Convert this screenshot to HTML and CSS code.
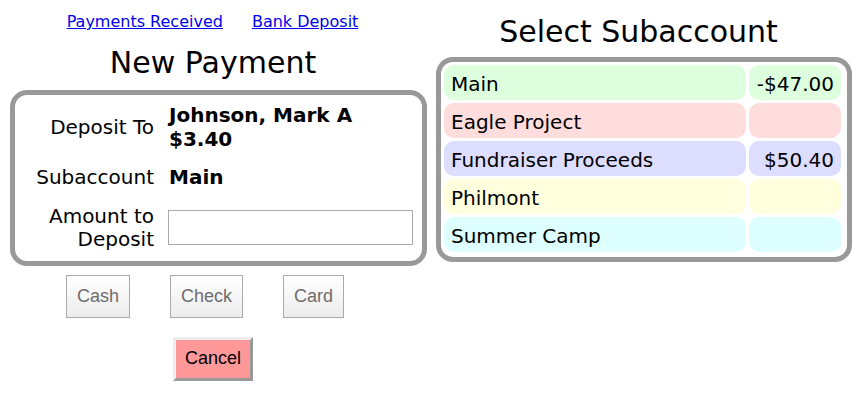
FILE: index.html
```html
<!DOCTYPE html>
<html>
<head>
<meta charset="utf-8">
<title>New Payment</title>
<link rel="stylesheet" href="styles.css">
</head>
<body>
<div class="page">
  <div class="left">
    <div class="links">
      <a href="#">Payments Received</a>
      <a href="#">Bank Deposit</a>
    </div>
    <h1 class="title">New Payment</h1>
    <div class="box form-box">
      <div class="label">Deposit To</div>
      <div class="value">Johnson, Mark A $3.40</div>
      <div class="label">Subaccount</div>
      <div class="value">Main</div>
      <div class="label">Amount to Deposit</div>
      <div class="field"><input type="text" class="amount"></div>
    </div>
    <div class="pay-buttons">
      <button class="btn" disabled>Cash</button>
      <button class="btn" disabled>Check</button>
      <button class="btn" disabled>Card</button>
    </div>
    <div class="cancel-row">
      <button class="cancel">Cancel</button>
    </div>
  </div>
  <div class="right">
    <h1 class="title title-right">Select Subaccount</h1>
    <div class="box sub-box">
      <div class="cell name green">Main</div>
      <div class="cell amt green">-$47.00</div>
      <div class="cell name red">Eagle Project</div>
      <div class="cell amt red"></div>
      <div class="cell name blue">Fundraiser Proceeds</div>
      <div class="cell amt blue">$50.40</div>
      <div class="cell name yellow">Philmont</div>
      <div class="cell amt yellow"></div>
      <div class="cell name cyan">Summer Camp</div>
      <div class="cell amt cyan"></div>
    </div>
  </div>
</div>
</body>
</html>
```

FILE: styles.css
```css
html, body {
  margin: 0;
  padding: 0;
  background: #fff;
}
body {
  font-family: "DejaVu Sans", Verdana, sans-serif;
  font-size: 20px;
  color: #000;
}
.page {
  display: flex;
  align-items: flex-start;
  padding-left: 8px;
}
.left {
  width: 410px;
  padding-top: 12px;
  display: flex;
  flex-direction: column;
}
.right {
  width: 413px;
  margin-left: 14px;
  padding-top: 14px;
  display: flex;
  flex-direction: column;
}
.links {
  display: flex;
  justify-content: center;
  gap: 29px;
  padding-right: 1px;
  font-size: 16px;
  line-height: 19px;
}
.links a {
  color: #0000ee;
  text-decoration: underline;
}
.title {
  margin: 14px 0 0;
  font-size: 30px;
  font-weight: normal;
  line-height: 35px;
  text-align: center;
}
.title-right {
  margin-top: 0;
}
.box {
  border: 5px solid #999;
  border-radius: 17px;
  box-sizing: border-box;
}
.form-box {
  margin-top: 10px;
  margin-left: 2px;
  width: 417px;
  padding: 9px 9px 9px 0;
  display: grid;
  grid-template-columns: 139px 1fr;
  column-gap: 15px;
  row-gap: 15px;
  align-items: center;
}
.label {
  text-align: right;
  line-height: 23.5px;
}
.value {
  font-weight: bold;
  line-height: 23.5px;
}
.field {
  display: flex;
  align-self: start;
  padding-top: 5px;
}
.amount {
  width: 245px;
  height: 35px;
  box-sizing: border-box;
  border: 1px solid #a9a9a9;
  margin: 0 0 0 -1px;
  padding: 2px 4px;
  font-size: 16px;
  background: #fff;
}
.pay-buttons {
  margin-top: 9px;
  display: flex;
  justify-content: center;
  gap: 40px;
  padding-right: 16px;
}
.btn {
  height: 43px;
  padding: 0 10px;
  font-family: "Liberation Sans", Arial, sans-serif;
  font-size: 18px;
  color: #6d6d6d;
  background: linear-gradient(#ffffff, #ececec);
  border: 1px solid #aaa;
  border-radius: 0;
}
.cancel-row {
  margin-top: 19px;
  display: flex;
  justify-content: center;
}
.cancel {
  height: 44px;
  padding: 0 9px;
  font-family: "Liberation Sans", Arial, sans-serif;
  font-size: 18px;
  color: #000;
  background: #ff9999;
  border: 3px solid;
  border-color: #eeeeee #999999 #999999 #eeeeee;
  border-radius: 0;
}
.sub-box {
  margin-top: 8px;
  margin-left: 4px;
  width: 416px;
  padding: 3px 3px 5px;
  display: grid;
  grid-template-columns: 302px 92px;
  grid-auto-rows: 35px;
  gap: 3px;
}
.cell {
  border-radius: 10px;
  padding: 3px 7px 0;
  display: flex;
  align-items: center;
  line-height: 23px;
}
.amt {
  justify-content: flex-end;
}
.green { background: #ddffdd; }
.red { background: #ffdddd; }
.blue { background: #ddddff; }
.yellow { background: #ffffdd; }
.cyan { background: #ddffff; }
```
